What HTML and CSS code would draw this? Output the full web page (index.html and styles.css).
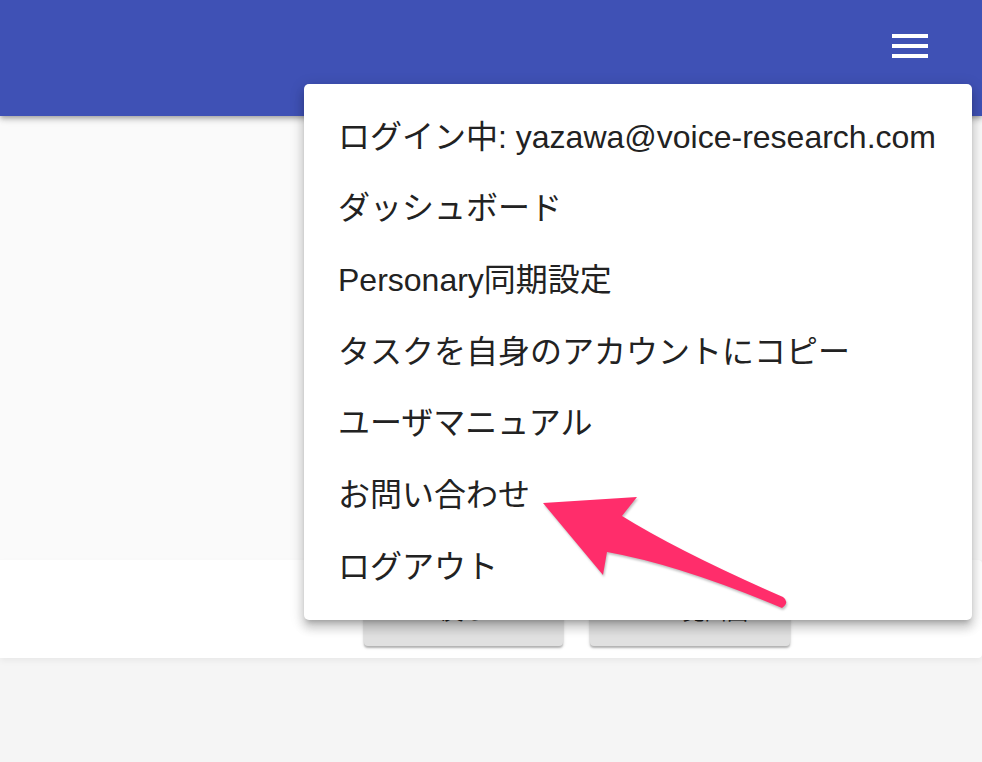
FILE: index.html
```html
<!DOCTYPE html>
<html lang="ja">
<head>
<meta charset="utf-8">
<link rel="stylesheet" href="styles.css">
</head>
<body>
<header class="appbar">
  <button class="burger" aria-label="menu">
    <span></span><span></span><span></span>
  </button>
</header>
<main class="content"></main>
<section class="card">
  <div class="btn">戻る</div>
  <div class="btn"><span class="ico"><i></i><i></i></span>一覧画面</div>
</section>
<footer class="foot"></footer>

<nav class="menu">
  <div class="item"><span>ログイン中: yazawa@voice-research.com</span></div>
  <div class="item">ダッシュボード</div>
  <div class="item">Personary同期設定</div>
  <div class="item">タスクを自身のアカウントにコピー</div>
  <div class="item">ユーザマニュアル</div>
  <div class="item">お問い合わせ</div>
  <div class="item">ログアウト</div>
</nav>

<svg class="arrow" width="262" height="125" viewBox="0 0 262 125">
  <path d="M13,13 L107,7 L92,26 Q150,62 253,107 Q260,112 252,118 Q150,75 77,62 L73,85 Z" fill="#ff2d6b"/>
</svg>
</body>
</html>
```

FILE: styles.css
```css
html, body {
  margin: 0;
  padding: 0;
}
body {
  width: 982px;
  height: 762px;
  overflow: hidden;
  background: #f5f5f5;
  font-family: "Liberation Sans", "Noto Sans CJK JP", sans-serif;
  color: #212121;
  position: relative;
}
.appbar {
  height: 116px;
  background: #3f51b5;
  display: flex;
  justify-content: flex-end;
  align-items: flex-start;
  box-shadow: 0 2px 4px -1px rgba(0,0,0,.2), 0 4px 5px 0 rgba(0,0,0,.14), 0 1px 10px 0 rgba(0,0,0,.12);
  position: relative;
  z-index: 2;
}
.burger {
  margin: 34px 54px 0 0;
  padding: 0;
  border: 0;
  background: none;
  width: 36px;
  display: flex;
  flex-direction: column;
  gap: 6px;
}
.burger span {
  display: block;
  height: 4px;
  background: #fff;
}
.content {
  height: 444px;
  background: #fafafa;
  display: block;
}
.card {
  height: 98px;
  box-sizing: border-box;
  background: #fff;
  border-radius: 0 4px 4px 0;
  padding: 30px 0 0 364px;
  display: flex;
  gap: 27px;
  box-shadow: 0 3px 6px rgba(0,0,0,.05);
  position: relative;
  z-index: 1;
}
.btn {
  width: 199px;
  height: 56px;
  box-sizing: border-box;
  padding-bottom: 18px;
  background: #e0e0e0;
  border-radius: 4px;
  box-shadow: 0 2px 2px rgba(0,0,0,.25), 0 1px 4px rgba(0,0,0,.12);
  display: flex;
  align-items: center;
  justify-content: center;
  gap: 10px;
  font-size: 22px;
  color: #222;
}
.btn + .btn { width: 200px; }
.ico {
  display: flex;
  gap: 3px;
}
.ico i {
  display: block;
  width: 8px;
  height: 18px;
  background: #1a1a1a;
}
.foot {
  display: block;
}
.menu {
  position: absolute;
  top: 84px;
  left: 304px;
  width: 668px;
  box-sizing: border-box;
  padding: 14px 0 20px 34px;
  background: #fff;
  border-radius: 5px;
  box-shadow: 0 5px 5px -3px rgba(0,0,0,.2), 0 8px 10px 1px rgba(0,0,0,.14), 0 3px 14px 2px rgba(0,0,0,.12);
  z-index: 5;
}
.item {
  height: 71.67px;
  display: flex;
  align-items: center;
  font-size: 32px;
  white-space: pre;
  color: #222;
}
.arrow {
  position: absolute;
  left: 530px;
  top: 490px;
  z-index: 6;
  filter: drop-shadow(1px 2px 1px rgba(0,0,0,.25));
}
```
